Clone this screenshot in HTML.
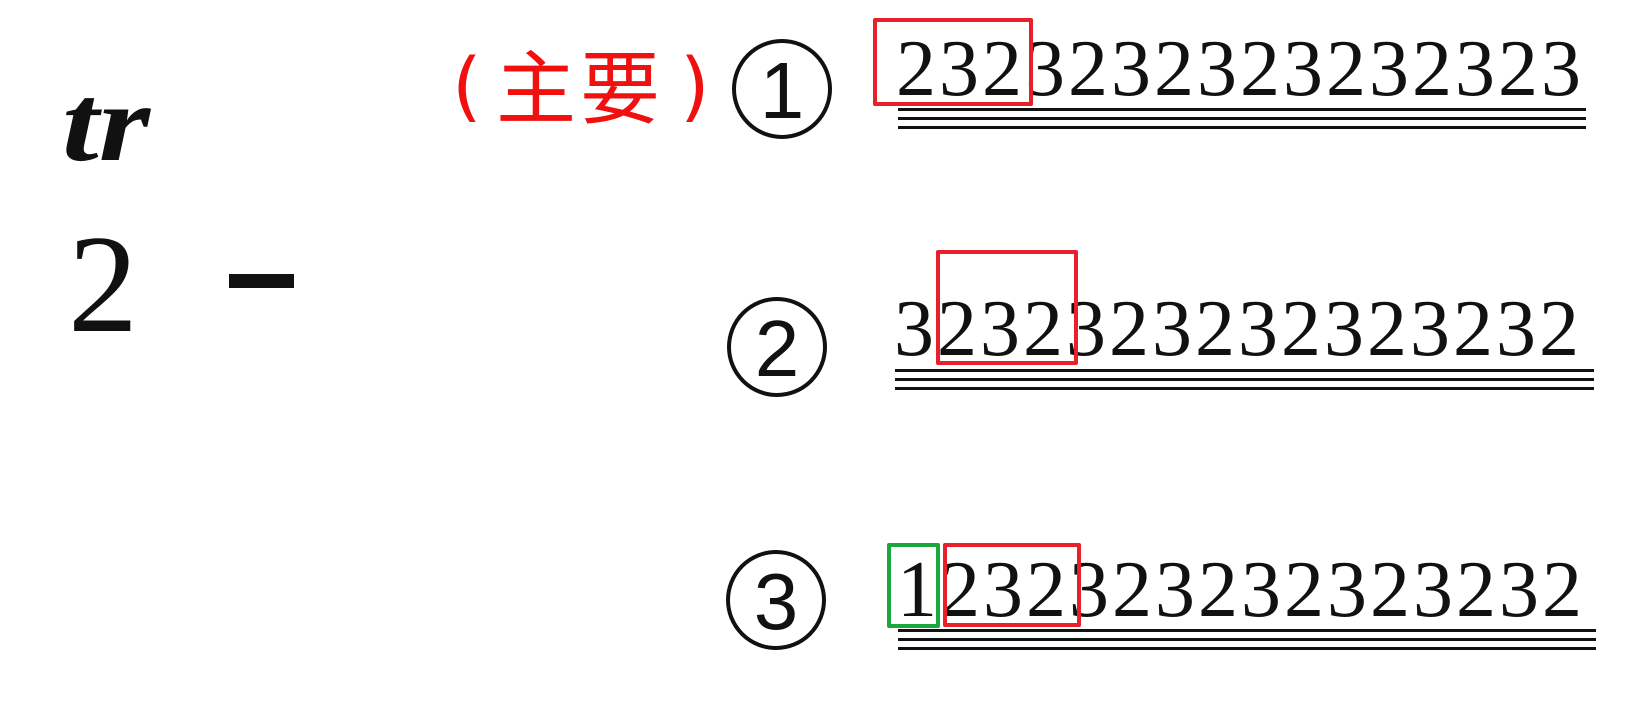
<!DOCTYPE html>
<html><head><meta charset="utf-8"><style>
html,body{margin:0;padding:0;background:#fff;width:1646px;height:714px;overflow:hidden;position:relative}
.a{position:absolute}
.d{position:absolute;font-family:"Liberation Serif",serif;font-size:80px;letter-spacing:3px;line-height:1;color:#111;white-space:nowrap}
.l{position:absolute;height:3px;background:#111}
.box{position:absolute;border:4px solid #e8202a;border-radius:2px;box-sizing:border-box}
.r{position:absolute;font-family:"Liberation Sans","Noto Sans CJK SC",sans-serif;font-size:80px;line-height:1;color:#f01010}
</style></head><body>
<div class="a" style="left:62px;top:68px;font-family:'Liberation Serif',serif;font-weight:bold;font-style:italic;font-size:110px;line-height:1;color:#111;transform:scaleX(1.2);transform-origin:0 0">tr</div>
<div class="a" style="left:68px;top:215px;font-family:'Liberation Serif',serif;font-size:140px;line-height:1;color:#111">2</div>
<div class="a" style="left:229px;top:274px;width:65px;height:14px;background:#111"></div>
<div class="r" style="left:452px;top:48px;font-family:'DejaVu Sans',sans-serif;font-weight:normal;font-size:76px">(</div>
<div class="r" style="left:496px;top:50px;letter-spacing:4px">主要</div>
<div class="r" style="left:680px;top:48px;font-family:'DejaVu Sans',sans-serif;font-size:76px">)</div>

<svg class="a" style="left:0;top:0" width="1646" height="714">
<g fill="none" stroke="#111" stroke-width="4">
<circle cx="782" cy="89" r="48"/><circle cx="777" cy="347" r="48"/><circle cx="776" cy="600" r="48"/>
</g>
<g font-family="Liberation Sans,sans-serif" font-size="80" fill="#111" text-anchor="middle">
<text x="782" y="118">1</text><text x="777" y="376">2</text><text x="776" y="629">3</text>
</g>
</svg>

<div class="d" style="left:896px;top:29px">2323232323232323</div>
<div class="l" style="left:898px;top:108px;width:688px"></div>
<div class="l" style="left:898px;top:117px;width:688px"></div>
<div class="l" style="left:898px;top:126px;width:688px"></div>
<div class="box" style="left:873px;top:18px;width:160px;height:88px"></div>

<div class="d" style="left:894px;top:289px">3232323232323232</div>
<div class="l" style="left:895px;top:369px;width:699px"></div>
<div class="l" style="left:895px;top:378px;width:699px"></div>
<div class="l" style="left:895px;top:387px;width:699px"></div>
<div class="box" style="left:936px;top:250px;width:142px;height:115px"></div>

<div class="d" style="left:897px;top:550px">1232323232323232</div>
<div class="l" style="left:898px;top:629px;width:698px"></div>
<div class="l" style="left:898px;top:638px;width:698px"></div>
<div class="l" style="left:898px;top:647px;width:698px"></div>
<div class="box" style="left:887px;top:543px;width:53px;height:85px;border-color:#1aa83c"></div>
<div class="box" style="left:943px;top:543px;width:138px;height:84px"></div>
</body></html>
